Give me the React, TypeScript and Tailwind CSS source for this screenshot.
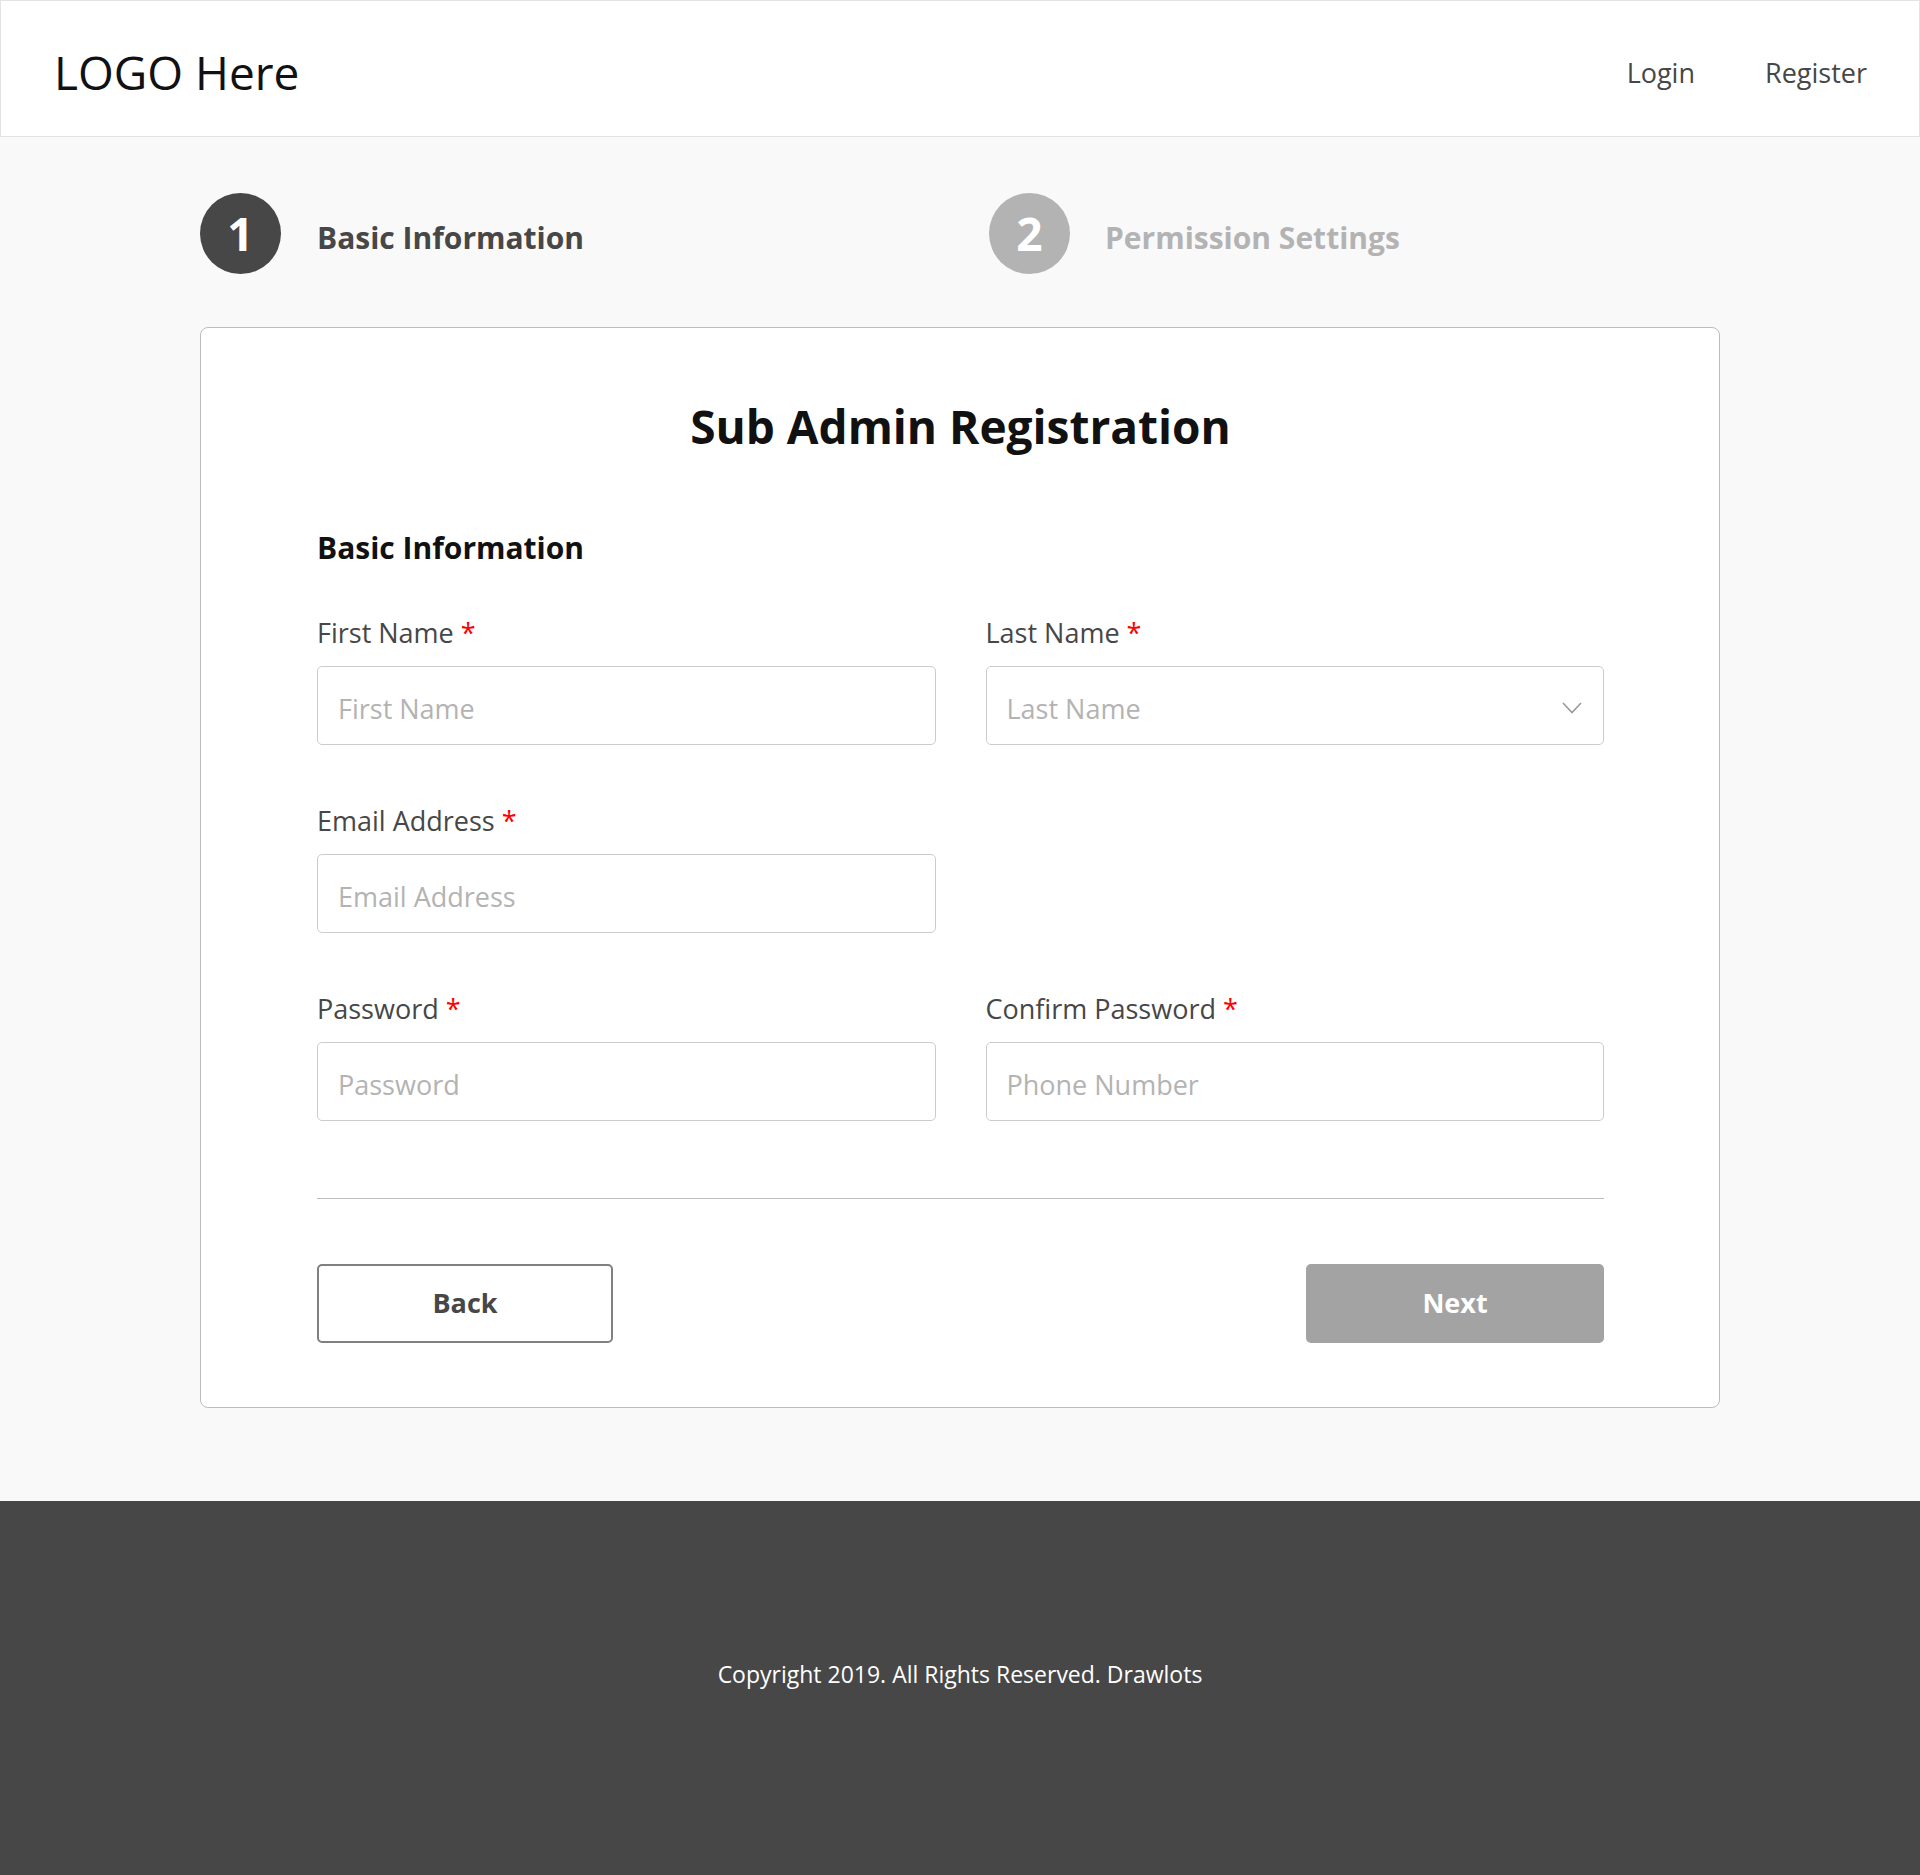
import React from "react";

const font = "font-['Open_Sans','Noto_Sans',sans-serif]";

function Field({
  label,
  placeholder,
  type = "text",
  select = false,
}: {
  label: string;
  placeholder: string;
  type?: string;
  select?: boolean;
}) {
  return (
    <div className="flex flex-col">
      <label className="text-[27px] leading-[28px] text-[#474747]">
        {label} <span className="text-[#ff0000]">*</span>
      </label>
      <div className="mt-[19px] flex h-[79px] items-center rounded-[5px] border border-[#cccccc] bg-white px-[20px]">
        <input
          type={type}
          placeholder={placeholder}
          className="h-full min-w-0 flex-1 bg-transparent pt-[5px] text-[27px] text-[#333] outline-none placeholder:text-[#b3b3b3]"
        />
        {select && (
          <svg width="20" height="12" viewBox="0 0 20 12" fill="none" className="mr-px mt-[4px] shrink-0">
            <path d="M1 1l9 9.5L19 1" stroke="#999999" strokeWidth="1.6" />
          </svg>
        )}
      </div>
    </div>
  );
}

export default function App() {
  return (
    <div className={`min-h-screen bg-[#f9f9f9] ${font}`}>
      {/* Header */}
      <header className="flex h-[137px] items-center justify-between border border-[#e3e3e3] bg-white pt-[6px] pl-[53px] pr-[52px]">
        <div className="text-[46px] leading-none text-[#111]">LOGO Here</div>
        <nav className="mt-[4px] flex items-center gap-[70px] text-[27px] text-[#474747]">
          <a href="#">Login</a>
          <a href="#">Register</a>
        </nav>
      </header>

      {/* Steps + card */}
      <main className="mx-auto w-[1520px] pt-[56px] pb-[93px]">
        <div className="flex items-center">
          <div className="flex w-[789px] items-center gap-[36px]">
            <div className="flex h-[81px] w-[81px] items-center justify-center rounded-full bg-[#474747] text-[46px] font-bold text-white">
              1
            </div>
            <span className="pt-[8px] text-[30px] font-bold text-[#474747]">Basic Information</span>
          </div>
          <div className="flex items-center gap-[35px]">
            <div className="flex h-[81px] w-[81px] items-center justify-center rounded-full bg-[#b3b3b3] text-[46px] font-bold text-white">
              2
            </div>
            <span className="pt-[8px] text-[30px] font-bold text-[#b3b3b3]">Permission Settings</span>
          </div>
        </div>

        <div className="mt-[53px] rounded-[8px] border border-[#bdbdbd] bg-white pl-[116px] pr-[115px] pt-[74px] pb-[64px]">
          <h1 className="text-center text-[46px] font-bold leading-[48px] text-[#111]">
            Sub Admin Registration
          </h1>

          <h2 className="mt-[82px] text-[30px] font-bold leading-[32px] text-[#111]">Basic Information</h2>

          <div className="mt-[55px] grid grid-cols-2 gap-x-[50px] gap-y-[62px]">
            <Field label="First Name" placeholder="First Name" />
            <Field label="Last Name" placeholder="Last Name" select />
            <Field label="Email Address" placeholder="Email Address" type="email" />
            <div />
            <Field label="Password" placeholder="Password" type="password" />
            <Field label="Confirm Password" placeholder="Phone Number" type="password" />
          </div>

          <div className="mt-[77px] h-px bg-[#bdbdbd]" />

          <div className="mt-[65px] flex items-center justify-between">
            <button className="h-[79px] w-[296px] rounded-[5px] border-2 border-[#808080] bg-white text-[27px] font-bold text-[#474747]">
              Back
            </button>
            <button className="h-[79px] w-[298px] rounded-[5px] bg-[#a3a3a3] text-[27px] font-bold text-white">
              Next
            </button>
          </div>
        </div>
      </main>

      {/* Footer */}
      <footer className="flex h-[375px] justify-center bg-[#474747] pt-[158px]">
        <p className="text-[23px] leading-[31px] text-white">Copyright 2019. All Rights Reserved. Drawlots</p>
      </footer>
    </div>
  );
}
